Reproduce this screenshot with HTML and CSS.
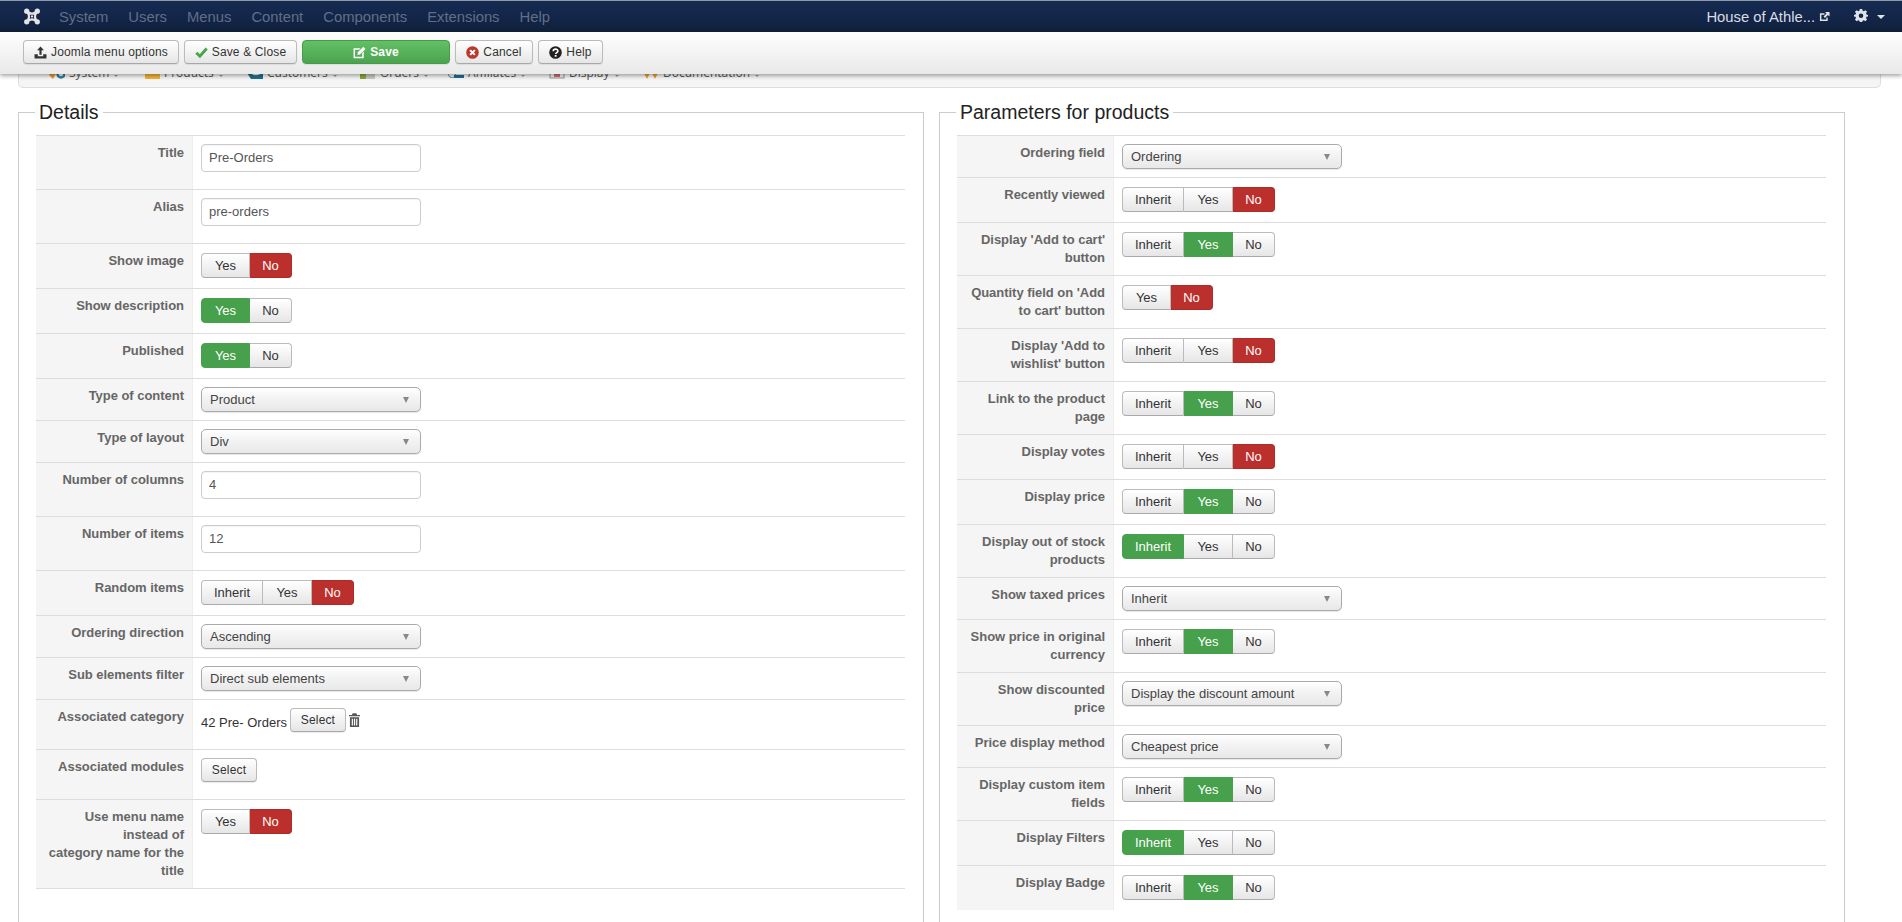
FILE: index.html
```html
<!DOCTYPE html>
<html lang="en">
<head>
<meta charset="utf-8">
<title>Edit menu item</title>
<link rel="stylesheet" href="styles.css">
</head>
<body>
<header class="navbar">
  <svg class="logo" viewBox="0 0 18 18"><g fill="#e4e4e4"><circle cx="3.4" cy="3.4" r="2.8"/><circle cx="14.6" cy="3.4" r="2.8"/><circle cx="3.4" cy="14.6" r="2.8"/><circle cx="14.6" cy="14.6" r="2.8"/></g><path d="M4 4C8 6.5 10 6.5 14 4C11.5 8 11.500 10 14 14C10 11.500 8 11.500 4 14C6.500 10 6.500 8 4 4Z" fill="none" stroke="#e4e4e4" stroke-width="2.4"/><circle cx="9" cy="9" r="1.2" fill="#e4e4e4"/></svg>
  <nav class="nav-main">
    <span>System</span><span>Users</span><span>Menus</span><span>Content</span><span>Components</span><span>Extensions</span><span>Help</span>
  </nav>
  <div class="nav-right">
    <span class="site">House of Athle...</span>
    <svg class="ext" viewBox="0 0 12 12"><path d="M1 2.500H6V4H2.600V9.400H8V7H9.500V11H1Z" fill="#dfe3e8"/><path d="M6.500 1H11.500V6L9.700 4.300L6.500 7.500L5 6L8.200 2.800Z" fill="#dfe3e8"/></svg>
    <svg class="gear" viewBox="0 0 16 16"><path fill-rule="evenodd" d="M6.600 1H9.400L9.800 3L11.200 3.600L13 2.500L14.900 4.400L13.700 6.100L14.300 7.500L16 7.900V9.700L14.300 10.100L13.700 11.500L14.900 13.200L13 15L11.200 13.900L9.800 14.500L9.400 16H6.600L6.200 14.500L4.800 13.900L3 15L1.100 13.200L2.300 11.500L1.700 10.100L0 9.700V7.900L1.700 7.500L2.300 6.100L1.100 4.400L3 2.500L4.800 3.600L6.200 3ZM8 6.200A2.600 2.600 0 1 0 8 11.400A2.600 2.600 0 1 0 8 6.200Z" fill="#dfe3e8"/></svg>
    <span class="caret"></span>
  </div>
</header>

<div class="toolbar">
  <button class="btn b-joomla"><svg class="ico" viewBox="0 0 12 12"><path d="M6 .5L9.200 4H7V8H5V4H2.800ZM.5 7.500H3.500V9.500H8.500V7.500H11.500V11.500H.5Z" fill="#333"/></svg>Joomla menu options</button>
  <button class="btn b-close"><svg class="ico" viewBox="0 0 12 12"><path d="M1.200 6.200L4.500 9.500L10.800 2.300" fill="none" stroke="#46a546" stroke-width="2.600"/></svg>Save &amp; Close</button>
  <button class="btn b-save"><svg class="ico" viewBox="0 0 12 12"><path d="M.5 2H7L5.700 3.400H1.900V10H8.500V6.500L9.900 5.100V11.400H.5Z" fill="#fff"/><path d="M4.500 5.800L9.500 .8L11.500 2.800L6.500 7.800L4.100 8.200Z" fill="#fff"/></svg>Save</button>
  <button class="btn b-cancel"><svg class="ico" viewBox="0 0 12 12"><circle cx="6" cy="6" r="5.800" fill="#bd362f"/><path d="M3.800 3.800L8.200 8.200M8.200 3.800L3.800 8.200" stroke="#fff" stroke-width="1.900"/></svg>Cancel</button>
  <button class="btn b-help"><svg class="ico" viewBox="0 0 12 12"><circle cx="6" cy="6" r="5.800" fill="#222"/><path d="M3.900 4.800C4 2.300 8.200 2.300 8.200 4.700C8.200 6.200 6.200 6 6.200 7.400" fill="none" stroke="#fff" stroke-width="1.500"/><rect x="5.300" y="8.300" width="1.700" height="1.600" fill="#fff"/></svg>Help</button>
</div>

<div class="submenu">
  <div class="submenu-row">
    <span class="sub s-system"><svg class="sub-ico" viewBox="0 0 16 16"><path d="M0 12L6 4L8 9L4 16Z" fill="#e8952c"/><circle cx="12" cy="11" r="3.500" fill="none" stroke="#2f7d9c" stroke-width="2.500"/></svg>System<i></i></span>
    <span class="sub s-products"><svg class="sub-ico" viewBox="0 0 16 16"><rect x="1" y="2" width="15" height="14" fill="#f0b534"/></svg>Products<i></i></span>
    <span class="sub s-customers"><svg class="sub-ico" viewBox="0 0 16 16"><path d="M0 10H4C6 13 10 13 16 10V16H4Z" fill="#1f6f8f"/></svg>Customers<i></i></span>
    <span class="sub s-orders"><svg class="sub-ico" viewBox="0 0 16 16"><rect x="0" y="6" width="6" height="10" fill="#8aa63a"/><rect x="6" y="8" width="9" height="8" fill="#c9c9c0"/></svg>Orders<i></i></span>
    <span class="sub s-affiliates"><svg class="sub-ico" viewBox="0 0 16 16"><circle cx="4" cy="11" r="3.500" fill="none" stroke="#7b9aa6" stroke-width="1.200"/><rect x="6" y="12" width="10" height="3" fill="#1f6f8f"/></svg>Affiliates<i></i></span>
    <span class="sub s-display"><svg class="sub-ico" viewBox="0 0 16 16"><rect x="1" y="2" width="14" height="13" fill="#f2f2f2" stroke="#9a8f9a"/><rect x="5" y="9" width="6" height="5" fill="#d06a6a"/></svg>Display<i></i></span>
    <span class="sub s-doc"><svg class="sub-ico" viewBox="0 0 16 16"><path d="M1 10H7L4 16ZM9 10H15L12 16Z" fill="#e8a02c"/></svg>Documentation<i></i></span>
  </div>
</div>

<main class="columns">
  <fieldset class="panel">
    <legend>Details</legend>
    <div class="row"><div class="lbl">Title</div><div class="val v-input"><input class="field" type="text" value="Pre-Orders"></div></div>
    <div class="row"><div class="lbl">Alias</div><div class="val v-input"><input class="field" type="text" value="pre-orders"></div></div>
    <div class="row"><div class="lbl">Show image</div><div class="val v-tog"><div class="toggle"><span class="opt w-y">Yes</span><span class="opt w-n no">No</span></div></div></div>
    <div class="row"><div class="lbl">Show description</div><div class="val v-tog"><div class="toggle"><span class="opt w-y yes">Yes</span><span class="opt w-n">No</span></div></div></div>
    <div class="row"><div class="lbl">Published</div><div class="val v-tog"><div class="toggle"><span class="opt w-y yes">Yes</span><span class="opt w-n">No</span></div></div></div>
    <div class="row"><div class="lbl">Type of content</div><div class="val v-sel"><div class="select">Product</div></div></div>
    <div class="row"><div class="lbl">Type of layout</div><div class="val v-sel"><div class="select">Div</div></div></div>
    <div class="row"><div class="lbl">Number of columns</div><div class="val v-input"><input class="field" type="text" value="4"></div></div>
    <div class="row"><div class="lbl">Number of items</div><div class="val v-input"><input class="field" type="text" value="12"></div></div>
    <div class="row"><div class="lbl">Random items</div><div class="val v-tog"><div class="toggle"><span class="opt w-i">Inherit</span><span class="opt w-y">Yes</span><span class="opt w-n no">No</span></div></div></div>
    <div class="row"><div class="lbl">Ordering direction</div><div class="val v-sel"><div class="select">Ascending</div></div></div>
    <div class="row"><div class="lbl">Sub elements filter</div><div class="val v-sel"><div class="select">Direct sub elements</div></div></div>
    <div class="row"><div class="lbl">Associated category</div><div class="val v-btn assoc"><span class="assoc-name">42 Pre- Orders</span><button class="btn b-select">Select</button><svg class="trash" viewBox="0 0 12 15"><path fill-rule="evenodd" d="M4 0H8L8.800 2H12V3.500H0V2H3.200ZM1 4.500H11V15H1ZM3 6V13.500H4.300V6ZM5.400 6V13.500H6.700V6ZM7.800 6V13.500H9.100V6Z" fill="#555"/></svg></div></div>
    <div class="row"><div class="lbl">Associated modules</div><div class="val v-btn"><button class="btn b-select">Select</button></div></div>
    <div class="row row-last"><div class="lbl">Use menu name<br>instead of<br>category name for the<br>title</div><div class="val v-tog"><div class="toggle"><span class="opt w-y">Yes</span><span class="opt w-n no">No</span></div></div></div>
  </fieldset>

  <fieldset class="panel">
    <legend>Parameters for products</legend>
    <div class="row"><div class="lbl">Ordering field</div><div class="val v-sel"><div class="select">Ordering</div></div></div>
    <div class="row"><div class="lbl">Recently viewed</div><div class="val v-tog"><div class="toggle"><span class="opt w-i">Inherit</span><span class="opt w-y">Yes</span><span class="opt w-n no">No</span></div></div></div>
    <div class="row"><div class="lbl">Display 'Add to cart' button</div><div class="val v-tog"><div class="toggle"><span class="opt w-i">Inherit</span><span class="opt w-y yes">Yes</span><span class="opt w-n">No</span></div></div></div>
    <div class="row"><div class="lbl">Quantity field on 'Add to cart' button</div><div class="val v-tog"><div class="toggle"><span class="opt w-y">Yes</span><span class="opt w-n no">No</span></div></div></div>
    <div class="row"><div class="lbl">Display 'Add to wishlist' button</div><div class="val v-tog"><div class="toggle"><span class="opt w-i">Inherit</span><span class="opt w-y">Yes</span><span class="opt w-n no">No</span></div></div></div>
    <div class="row"><div class="lbl">Link to the product page</div><div class="val v-tog"><div class="toggle"><span class="opt w-i">Inherit</span><span class="opt w-y yes">Yes</span><span class="opt w-n">No</span></div></div></div>
    <div class="row"><div class="lbl">Display votes</div><div class="val v-tog"><div class="toggle"><span class="opt w-i">Inherit</span><span class="opt w-y">Yes</span><span class="opt w-n no">No</span></div></div></div>
    <div class="row"><div class="lbl">Display price</div><div class="val v-tog"><div class="toggle"><span class="opt w-i">Inherit</span><span class="opt w-y yes">Yes</span><span class="opt w-n">No</span></div></div></div>
    <div class="row"><div class="lbl">Display out of stock products</div><div class="val v-tog"><div class="toggle"><span class="opt w-i yes">Inherit</span><span class="opt w-y">Yes</span><span class="opt w-n">No</span></div></div></div>
    <div class="row"><div class="lbl">Show taxed prices</div><div class="val v-sel"><div class="select">Inherit</div></div></div>
    <div class="row"><div class="lbl">Show price in original currency</div><div class="val v-tog"><div class="toggle"><span class="opt w-i">Inherit</span><span class="opt w-y yes">Yes</span><span class="opt w-n">No</span></div></div></div>
    <div class="row"><div class="lbl">Show discounted price</div><div class="val v-sel"><div class="select">Display the discount amount</div></div></div>
    <div class="row"><div class="lbl">Price display method</div><div class="val v-sel"><div class="select">Cheapest price</div></div></div>
    <div class="row"><div class="lbl">Display custom item fields</div><div class="val v-tog"><div class="toggle"><span class="opt w-i">Inherit</span><span class="opt w-y yes">Yes</span><span class="opt w-n">No</span></div></div></div>
    <div class="row"><div class="lbl">Display Filters</div><div class="val v-tog"><div class="toggle"><span class="opt w-i yes">Inherit</span><span class="opt w-y">Yes</span><span class="opt w-n">No</span></div></div></div>
    <div class="row row-end"><div class="lbl">Display Badge</div><div class="val v-tog"><div class="toggle"><span class="opt w-i">Inherit</span><span class="opt w-y yes">Yes</span><span class="opt w-n">No</span></div></div></div>
  </fieldset>
</main>
</body>
</html>
```
FILE: styles.css
```css
* { box-sizing: border-box; }
html, body { height: 100%; overflow: hidden; }
body {
  margin: 0;
  background: #fff;
  color: #333;
  font-family: "Liberation Sans", Arial, sans-serif;
  font-size: 13px;
  line-height: 18px;
}

/* top navigation */
.navbar {
  height: 32px;
  display: flex;
  align-items: center;
  padding: 0 17px 0 23px;
  border-top: 1px solid #8d9ba3;
  background: linear-gradient(#172a52, #122445 70%, #0f2038);
}
.logo { width: 18px; height: 17px; margin-right: 18px; flex: none; margin-top: -1px; }
.nav-main { display: flex; gap: 20px; font-size: 14.800px; color: #606f88; }
.nav-right { margin-left: auto; display: flex; align-items: center; color: #d9dde3; font-size: 14.800px; }
.ext { width: 11px; height: 11px; margin: 0 0 0 4px; }
.gear { width: 14px; height: 14px; margin: -3px 0 0 24px; }
.caret { width: 0; height: 0; margin-left: 9px; border: 4px solid transparent; border-top-color: #dfe3e8; border-bottom: 0; }

/* toolbar */
.toolbar {
  position: relative;
  z-index: 2;
  height: 42px;
  display: flex;
  gap: 5px;
  padding: 8px 0 0 23px;
  background: linear-gradient(#fdfdfd, #fafafa 20%, #e9e9e9);
  box-shadow: 0 2px 4px rgba(0, 0, 0, .35);
}
.btn {
  height: 24px;
  display: inline-flex;
  align-items: center;
  justify-content: center;
  padding: 0;
  border: 1px solid #bbb;
  border-bottom-color: #a8a8a8;
  border-radius: 4px;
  background: linear-gradient(#fff, #e6e6e6);
  box-shadow: 0 1px 1px rgba(0, 0, 0, .08);
  color: #333;
  font: 12px "Liberation Sans", Arial, sans-serif;
  letter-spacing: .15px;
}
.ico { width: 13px; height: 13px; margin-right: 4px; flex: none; }
.b-joomla { width: 156px; }
.b-close { width: 113px; }
.b-save {
  width: 148px;
  color: #fff;
  font-weight: bold;
  border-color: #479a48;
  background: linear-gradient(#62c065, #4ca34f);
}
.b-cancel { width: 78px; }
.b-help { width: 65px; }
.b-select { width: 56px; }

/* component submenu, mostly hidden beneath the toolbar */
.submenu {
  height: 14px;
  margin: 0 21px 0 18px;
  overflow: hidden;
  background: #f5f5f5;
  border: 1px solid #ddd;
  border-top: 0;
  border-radius: 0 0 5px 5px;
}
.submenu-row {
  display: flex;
  margin-top: -11px;
  padding-left: 30px;
  color: #555;
  font: 12px/20px "Open Sans", sans-serif;
}
.sub { display: flex; align-items: center; white-space: nowrap; }
.sub i { position: relative; top: 3px; width: 0; height: 0; margin-left: 5px; border: 2.500px solid transparent; border-top-color: #999; border-bottom: 0; }
.sub-ico { width: 16px; height: 16px; margin-right: 4px; flex: none; position: relative; top: -2px; }
.s-system { width: 95px; }
.s-products { width: 103px; }
.s-customers { width: 113px; }
.s-orders { width: 88px; }
.s-affiliates { width: 101px; }
.s-display { width: 94px; }

/* panels */
.columns {
  display: flex;
  gap: 15px;
  margin: 12px 0 0 18px;
  width: 1827px;
}
.panel {
  width: 906px;
  margin: 0;
  min-width: 0;
  padding: 0 18px 60px 17px;
  border: 1px solid #ccc;
  border-bottom: 0;
}
legend {
  margin-left: -1px;
  padding: 0 4px;
  font-size: 19.500px;
  line-height: 24px;
  color: #222;
  margin-bottom: 11px;
}
.row {
  display: grid;
  grid-template-columns: 157px 1fr;
  border-top: 1px solid #ddd;
}
.row-last { border-bottom: 1px solid #ddd; }
.lbl {
  padding: 8px 8px 8px 10px;
  background: #f5f5f5;
  border-right: 1px solid #eee;
  text-align: right;
  font-weight: bold;
  color: #666;
  letter-spacing: -.03px;
}
.val { padding-left: 8px; }
.v-input { padding-top: 8px; padding-bottom: 17px; }
.v-tog { padding-top: 9px; padding-bottom: 10px; }
.v-sel { padding-top: 8px; padding-bottom: 8px; }
.v-btn { padding-top: 8px; padding-bottom: 17px; }

.field {
  display: block;
  width: 220px;
  height: 28px;
  padding: 0 7px 1px;
  border: 1px solid #ccc;
  border-radius: 4px;
  box-shadow: inset 0 1px 1px rgba(0, 0, 0, .05);
  color: #555;
  font: 13px "Liberation Sans", Arial, sans-serif;
}

.toggle { display: flex; }
.opt {
  height: 25px;
  display: flex;
  align-items: center;
  justify-content: center;
  border: 1px solid #bbb;
  border-bottom-color: #aaa;
  border-left-width: 0;
  background: linear-gradient(#fff, #e6e6e6);
  color: #333;
}
.opt:first-child { border-left-width: 1px; border-radius: 4px 0 0 4px; }
.opt:last-child { border-radius: 0 4px 4px 0; }
.w-i { width: 62px; }
.w-y { width: 49px; }
.w-n { width: 42px; }
.yes { background: #47a04b; border-color: #47a04b; color: #fff; }
.no { background: #bb302c; border-color: #b02a27; color: #fff; }

.select {
  position: relative;
  width: 220px;
  height: 25px;
  padding-left: 8px;
  border: 1px solid #aaa;
  border-radius: 5px;
  background: linear-gradient(#fff, #f4f4f4 40%, #e8e8e8);
  box-shadow: 0 1px 1px rgba(0, 0, 0, .1);
  color: #444;
  line-height: 23px;
}
.select::after {
  content: "";
  position: absolute;
  top: 9px;
  right: 11px;
  border: 3.500px solid transparent;
  border-top: 6px solid #888;
  border-bottom: 0;
}

.assoc { display: flex; align-items: flex-start; }
.assoc-name { margin: 6px 3px 0 0; }
.trash { width: 11px; height: 14px; margin: 5px 0 0 3px; }
```
